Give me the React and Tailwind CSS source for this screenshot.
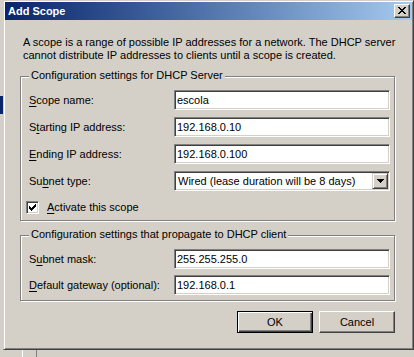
import React from "react"

/* ---------------------------
   SMALL WIN32 BITS
--------------------------- */

function Field({ children }) {
  return (
    <div className="w-[216px] h-[20px] bg-white border border-t-[#808080] border-l-[#808080] border-r-white border-b-white shadow-[inset_1px_1px_0_#404040,inset_-1px_-1px_0_#d4d0c8] pl-[2px] flex items-center text-black whitespace-nowrap">
      {children}
    </div>
  )
}

function Row({ label, children }) {
  return (
    <div className="flex items-center h-[20px]">
      <div className="w-[153px] pl-[8px] leading-[13px]">{label}</div>
      {children}
    </div>
  )
}

function Key({ children }) {
  return <span className="underline underline-offset-[2px] decoration-[1px]">{children}</span>
}

function Group({ title, height, children }) {
  return (
    <div
      className={`relative w-[375px] ${height} border border-[#808080] shadow-[inset_1px_1px_0_#fff,1px_1px_0_#fff] pt-[13px] flex flex-col`}
    >
      <span className="absolute -top-[8px] left-[8px] px-[2px] bg-[#d4d0c8] leading-[13px]">
        {title}
      </span>
      {children}
    </div>
  )
}

function CloseGlyph() {
  return (
    <svg width="8" height="7" viewBox="0 0 8 7" shapeRendering="crispEdges">
      <rect x="0" y="0" width="2" height="1" />
      <rect x="6" y="0" width="2" height="1" />
      <rect x="1" y="1" width="2" height="1" />
      <rect x="5" y="1" width="2" height="1" />
      <rect x="2" y="2" width="4" height="1" />
      <rect x="3" y="3" width="2" height="1" />
      <rect x="2" y="4" width="4" height="1" />
      <rect x="1" y="5" width="2" height="1" />
      <rect x="5" y="5" width="2" height="1" />
      <rect x="0" y="6" width="2" height="1" />
      <rect x="6" y="6" width="2" height="1" />
    </svg>
  )
}

function DownGlyph() {
  return (
    <svg width="7" height="4" viewBox="0 0 7 4" shapeRendering="crispEdges">
      <rect x="0" y="0" width="7" height="1" />
      <rect x="1" y="1" width="5" height="1" />
      <rect x="2" y="2" width="3" height="1" />
      <rect x="3" y="3" width="1" height="1" />
    </svg>
  )
}

function CheckGlyph() {
  return (
    <svg width="9" height="9" viewBox="0 0 9 9" shapeRendering="crispEdges">
      <rect x="1" y="3" width="1" height="3" />
      <rect x="2" y="4" width="1" height="3" />
      <rect x="3" y="5" width="1" height="3" />
      <rect x="4" y="4" width="1" height="3" />
      <rect x="5" y="3" width="1" height="3" />
      <rect x="6" y="2" width="1" height="3" />
      <rect x="7" y="1" width="1" height="3" />
    </svg>
  )
}

export default function App() {

  return (

    <div className="relative w-[414px] h-[357px] overflow-hidden bg-[#d4d0c8] text-[11px] text-black [font-family:'Liberation_Sans',Arial,sans-serif]">

      {/* stuff of the console behind the dialog */}
      <div className="absolute left-0 top-[96px] w-[3px] h-[18px] bg-[#0a246a]" />
      <div className="absolute left-[22px] top-[350px] w-[1px] h-[7px] bg-white" />
      <div className="absolute left-[36px] top-[350px] w-[1px] h-[7px] bg-[#808080]" />

      {/* dialog window */}
      <div className="ml-[3px] w-[411px] h-[350px] border border-t-[#d4d0c8] border-l-[#d4d0c8] border-r-[#404040] border-b-[#404040] shadow-[inset_1px_1px_0_#fff,inset_-1px_-1px_0_#808080] p-[1px] flex flex-col">

        {/* title bar */}
        <div className="h-[18px] flex items-center justify-between pl-[3px] pr-[2px] bg-gradient-to-r from-[#0a246a] to-[#a6caf0]">
          <span className="text-white font-bold leading-[13px]">Add Scope</span>
          <div className="w-[16px] h-[14px] bg-[#d4d0c8] border border-t-white border-l-white border-r-[#404040] border-b-[#404040] shadow-[inset_-1px_-1px_0_#808080] flex items-center justify-center pb-[1px]">
            <CloseGlyph />
          </div>
        </div>

        {/* body */}
        <div className="flex flex-col pl-[15px]">

          <p className="mt-[16px] ml-[3px] leading-[13px]">
            A scope is a range of possible IP addresses for a network. The DHCP server
            <br />
            cannot distribute IP addresses to clients until a scope is created.
          </p>

          <div className="mt-[14px]">
            <Group title="Configuration settings for DHCP Server" height="h-[145px]">

              <div className="flex flex-col gap-[7px]">
                <Row label={<><Key>S</Key>cope name:</>}>
                  <Field>escola</Field>
                </Row>
                <Row label={<>S<Key>t</Key>arting IP address:</>}>
                  <Field>192.168.0.10</Field>
                </Row>
                <Row label={<><Key>E</Key>nding IP address:</>}>
                  <Field>192.168.0.100</Field>
                </Row>
                <Row label={<>Su<Key>b</Key>net type:</>}>
                  <div className="w-[216px] h-[20px] bg-white border border-t-[#808080] border-l-[#808080] border-r-white border-b-white shadow-[inset_1px_1px_0_#404040,inset_-1px_-1px_0_#d4d0c8] p-[1px] pl-[3px] flex items-center justify-between whitespace-nowrap">
                    <span>Wired (lease duration will be 8 days)</span>
                    <div className="w-[16px] h-[16px] bg-[#d4d0c8] border border-t-[#d4d0c8] border-l-[#d4d0c8] border-r-[#404040] border-b-[#404040] shadow-[inset_1px_1px_0_#fff,inset_-1px_-1px_0_#808080] flex items-center justify-center">
                      <DownGlyph />
                    </div>
                  </div>
                </Row>
              </div>

              <div className="mt-[10px] pl-[5px] flex items-center gap-[8px]">
                <div className="w-[13px] h-[13px] bg-white border border-t-[#808080] border-l-[#808080] border-r-white border-b-white shadow-[inset_1px_1px_0_#404040,inset_-1px_-1px_0_#d4d0c8] flex items-center justify-center">
                  <CheckGlyph />
                </div>
                <span className="leading-[13px]"><Key>A</Key>ctivate this scope</span>
              </div>

            </Group>
          </div>

          <div className="mt-[14px]">
            <Group title="Configuration settings that propagate to DHCP client" height="h-[66px]">
              <div className="flex flex-col gap-[6px]">
                <Row label={<>S<Key>u</Key>bnet mask:</>}>
                  <Field>255.255.255.0</Field>
                </Row>
                <Row label={<><Key>D</Key>efault gateway (optional):</>}>
                  <Field>192.168.0.1</Field>
                </Row>
              </div>
            </Group>
          </div>

          {/* buttons */}
          <div className="mt-[10px] pr-[17px] flex justify-end gap-[6px]">
            <button className="w-[76px] h-[22px] bg-[#d4d0c8] border border-black shadow-[inset_1px_1px_0_#fff,inset_-1px_-1px_0_#404040,inset_-2px_-2px_0_#808080] leading-[13px]">
              OK
            </button>
            <button className="w-[76px] h-[22px] bg-[#d4d0c8] border border-t-white border-l-white border-r-[#404040] border-b-[#404040] shadow-[inset_-1px_-1px_0_#808080] leading-[13px]">
              Cancel
            </button>
          </div>

        </div>

      </div>

    </div>

  )

}
